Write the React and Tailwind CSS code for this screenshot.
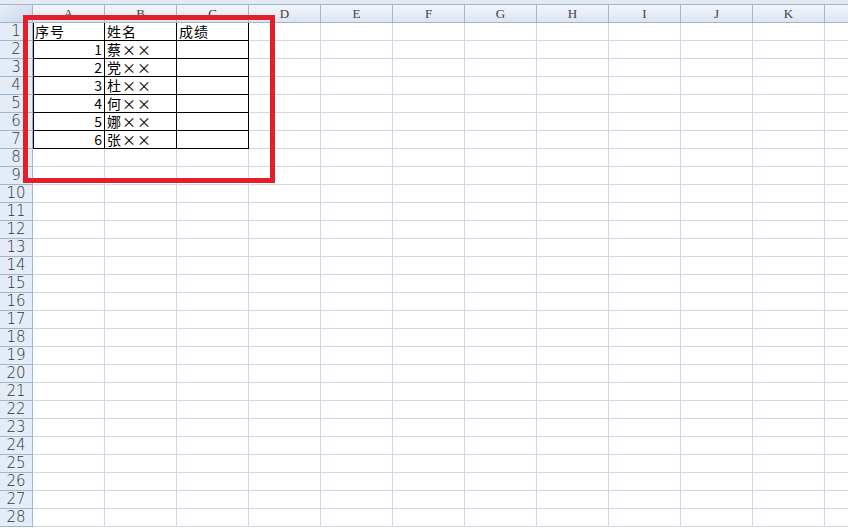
import React from 'react';

const COLS = ['A', 'B', 'C', 'D', 'E', 'F', 'G', 'H', 'I', 'J', 'K', 'L'];
const ROWS = Array.from({ length: 28 }, (_, i) => i + 1);

const data = {
  1: ['序号', '姓名', '成绩'],
  2: ['1', '蔡××', ''],
  3: ['2', '党××', ''],
  4: ['3', '杜××', ''],
  5: ['4', '何××', ''],
  6: ['5', '娜××', ''],
  7: ['6', '张××', ''],
};

const Cell = ({ row, col }) => {
  const inTable = row <= 7 && col < 3;
  const value = data[row] ? data[row][col] : '';
  const isNumber = row > 1 && col === 0;
  return (
    <div
      className={`w-[72px] shrink-0 h-full border-r border-b flex items-center overflow-hidden whitespace-nowrap text-[14px] leading-[15px] text-black ${
        inTable ? 'border-black' : 'border-[#d0d7e5]'
      } ${inTable && col === 0 ? 'shadow-[inset_1px_0_0_#000]' : ''} ${
        isNumber ? 'justify-end pr-[2px]' : 'pl-[2px] tracking-[1px]'
      }`}
    >
      {value}
    </div>
  );
};

export default function App() {
  return (
    <div
      className="relative w-[848px] h-[528px] overflow-hidden bg-white"
      style={{ fontFamily: '"Noto Sans CJK SC", "Liberation Sans", sans-serif' }}
    >
      <div className="h-[5px] bg-[#e4eaf2] border-b border-[#9eb6ce]" />

      {/* column headers */}
      <div className="flex h-[18px] border-b border-[#9eb6ce]">
        <div className="w-[33px] shrink-0 h-full border-r border-[#9eb6ce] bg-gradient-to-br from-[#e9eff7] to-[#c9d8ea]" />
        {COLS.map((c) => (
          <div
            key={c}
            className="w-[72px] shrink-0 h-full border-r border-[#9eb6ce] bg-gradient-to-b from-[#f3f6fa] to-[#dbe5f1] flex items-center justify-center text-[13px] leading-[15px] text-[#404040]"
            style={{ fontFamily: '"Liberation Serif", serif' }}
          >
            {c}
          </div>
        ))}
      </div>

      {ROWS.map((r) => (
        <div key={r} className="flex h-[18px]">
          <div
            className="w-[33px] shrink-0 h-full border-r border-b border-[#9eb6ce] bg-[#e4ecf7] flex items-center justify-center text-[15px] leading-[15px] text-[#333]"
            style={{ fontFamily: '"DejaVu Sans", sans-serif', fontWeight: 300 }}
          >
            {r}
          </div>
          {COLS.map((c, i) => (
            <Cell key={c} row={r} col={i} />
          ))}
        </div>
      ))}

      {/* red highlight box */}
      <div className="absolute left-[23px] top-[15px] w-[252px] h-[168px] border-[5px] border-[#e3202a]" />
    </div>
  );
}
